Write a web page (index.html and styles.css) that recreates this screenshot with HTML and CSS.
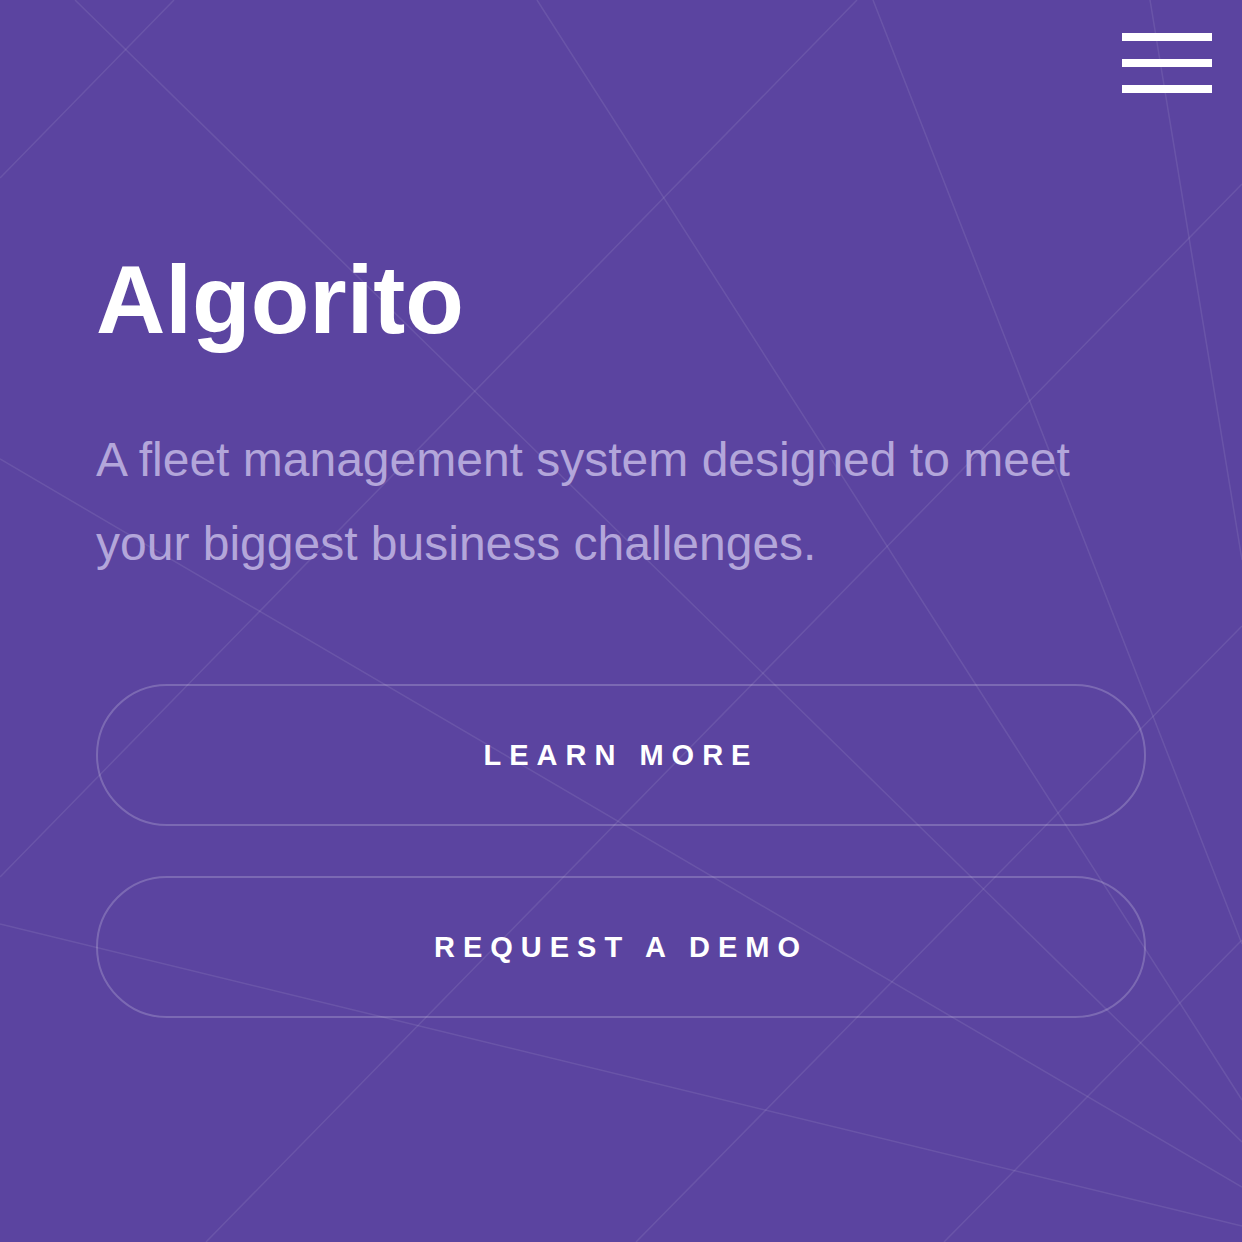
FILE: index.html
```html
<!DOCTYPE html>
<html lang="en">
<head>
<meta charset="utf-8">
<title>Algorito</title>
<link rel="stylesheet" href="styles.css">
</head>
<body>
<div class="page">
  <svg class="bg-lines" viewBox="0 0 1242 1242" preserveAspectRatio="none" aria-hidden="true">
    <line x1="0" y1="178" x2="174" y2="0"/>
    <line x1="75" y1="0" x2="1242" y2="1142"/>
    <line x1="857" y1="0" x2="0" y2="877"/>
    <line x1="537" y1="0" x2="1242" y2="1100"/>
    <line x1="873" y1="0" x2="1242" y2="944"/>
    <line x1="1150" y1="0" x2="1242" y2="560"/>
    <line x1="1242" y1="184" x2="206" y2="1242"/>
    <line x1="1242" y1="626" x2="636" y2="1242"/>
    <line x1="1242" y1="940" x2="944" y2="1242"/>
    <line x1="0" y1="459" x2="1242" y2="1187"/>
    <line x1="0" y1="924" x2="1242" y2="1226"/>
  </svg>
  <header class="topbar">
    <button class="menu" aria-label="Menu">
      <span class="bar"></span>
      <span class="bar"></span>
      <span class="bar"></span>
    </button>
  </header>
  <main class="hero">
    <h1 class="title">Algorito</h1>
    <p class="lead">A fleet management system designed to meet your biggest business challenges.</p>
    <div class="actions">
      <a class="pill" href="#">LEARN MORE</a>
      <a class="pill" href="#">REQUEST A DEMO</a>
    </div>
  </main>
</div>
</body>
</html>
```

FILE: styles.css
```css
* { box-sizing: border-box; }
html, body { margin: 0; padding: 0; }
body {
  background: #5b44a0;
  font-family: "Liberation Sans", Arial, Helvetica, sans-serif;
}
.page {
  position: relative;
  width: 1242px;
  height: 1242px;
  overflow: hidden;
  background: #5b44a0;
}
.bg-lines {
  position: absolute;
  left: 0;
  top: 0;
  width: 1242px;
  height: 1242px;
  z-index: 0;
}
.bg-lines line {
  stroke: rgba(255, 255, 255, 0.09);
  stroke-width: 1.5;
}
.topbar {
  position: relative;
  z-index: 1;
  display: flex;
  justify-content: flex-end;
  padding: 33px 30px 0 0;
}
.menu {
  display: flex;
  flex-direction: column;
  gap: 18px;
  width: 90px;
  padding: 0;
  border: 0;
  background: transparent;
  cursor: pointer;
}
.bar {
  display: block;
  width: 90px;
  height: 8px;
  background: #ffffff;
}
.hero {
  position: relative;
  z-index: 1;
  padding: 0 96px;
  display: flex;
  flex-direction: column;
}
.title {
  margin: 159px 0 0;
  font-size: 96px;
  line-height: 96px;
  font-weight: 700;
  color: #ffffff;
}
.lead {
  margin: 70px 0 0;
  font-size: 48px;
  line-height: 84px;
  font-weight: 400;
  color: #b3a6da;
}
.actions {
  margin-top: 98px;
  display: flex;
  flex-direction: column;
  gap: 50px;
}
.pill {
  display: flex;
  align-items: center;
  justify-content: center;
  height: 142px;
  border: 2px solid rgba(255, 255, 255, 0.2);
  border-radius: 71px;
  color: #ffffff;
  text-decoration: none;
  font-size: 29px;
  font-weight: 700;
  letter-spacing: 8px;
}
```
